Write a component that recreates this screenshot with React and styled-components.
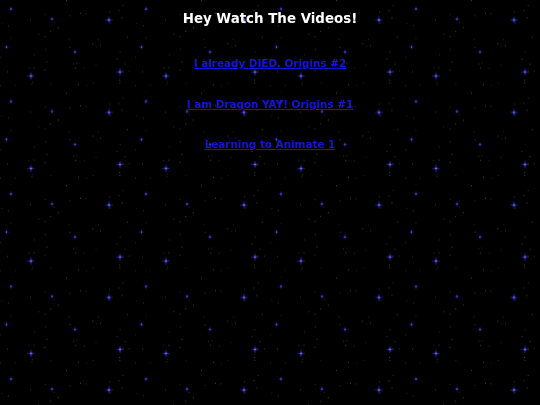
import React from "react";
import styled, { createGlobalStyle } from "styled-components";

const GlobalStyle = createGlobalStyle`
  html, body {
    margin: 0;
    padding: 0;
    background: #000;
  }
  body {
    font-family: "DejaVu Sans", Verdana, sans-serif;
  }
`;

const Sky = styled.svg`
  position: fixed;
  inset: 0;
  width: 100%;
  height: 100%;
  z-index: 0;
`;

const Page = styled.div`
  position: relative;
  z-index: 1;
  display: flex;
  flex-direction: column;
  align-items: center;
  padding-top: 11px;
  min-height: 394px;
`;

const Title = styled.h1`
  margin: 0;
  font-size: 13.4px;
  line-height: 16px;
  font-weight: bold;
  color: #ffffff;
`;

const VideoList = styled.div`
  display: flex;
  flex-direction: column;
  align-items: center;
  gap: 27.5px;
  margin-top: 30px;
`;

const VideoLink = styled.a`
  font-size: 10.4px;
  line-height: 13px;
  font-weight: bold;
  color: #1414e0;
  text-decoration: underline;
`;

// stars in one tile of the background (135 x 92.5)
const bigStars = [
  [109, 20],
  [31, 76],
  [120, 72],
];
const smallStars = [
  [11, 9],
  [52, 19],
  [6.5, 47],
  [75, 52],
];

// faint dust, seeded so the tile stays the same every render
const dust = (() => {
  let seed = 7;
  const rnd = () => {
    seed = (seed * 16807) % 2147483647;
    return seed / 2147483647;
  };
  const out = [];
  for (let i = 0; i < 55; i++) {
    out.push([rnd() * 135, rnd() * 92.5, 0.2 + rnd() * 0.35]);
  }
  return out;
})();

const videos = [
  "I already DIED. Origins #2",
  "I am Dragon YAY! Origins #1",
  "Learning to Animate 1",
];

const Star = ({ x, y, big }) => {
  const arm = big ? 3.8 : 2.4;
  const op = big ? 0.6 : 0.4;
  return (
    <g transform={`translate(${x} ${y})`}>
      <circle r={big ? 2.8 : 2} fill={big ? "url(#glowBig)" : "url(#glowSmall)"} />
      <line x1={-arm} x2={arm} y1="0" y2="0" stroke="#3030e0" strokeOpacity={op} strokeWidth="0.9" />
      <line y1={-arm} y2={arm} x1="0" x2="0" stroke="#3030e0" strokeOpacity={op} strokeWidth="0.9" />
      <rect x="-0.5" y="-0.5" width="1" height="1" fill={big ? "#b0b0ff" : "#7070f0"} />
    </g>
  );
};

const App = () => {
  return (
    <>
      <GlobalStyle />
      <Sky>
        <defs>
          <radialGradient id="glowBig">
            <stop offset="0%" stopColor="#7070f0" stopOpacity="0.8" />
            <stop offset="100%" stopColor="#2020a0" stopOpacity="0" />
          </radialGradient>
          <radialGradient id="glowSmall">
            <stop offset="0%" stopColor="#5050e0" stopOpacity="0.6" />
            <stop offset="100%" stopColor="#2020a0" stopOpacity="0" />
          </radialGradient>
          <pattern id="stars" width="135" height="92.5" patternUnits="userSpaceOnUse">
            {dust.map(([x, y, o], i) => (
              <rect key={i} x={x} y={y} width="0.9" height="0.9" fill="#9a9a9a" opacity={o} />
            ))}
            {smallStars.map(([x, y], i) => (
              <Star key={"s" + i} x={x} y={y} />
            ))}
            {bigStars.map(([x, y], i) => (
              <Star key={"b" + i} x={x} y={y} big />
            ))}
          </pattern>
        </defs>
        <rect width="100%" height="100%" fill="#000" />
        <rect width="100%" height="100%" fill="url(#stars)" />
      </Sky>
      <Page>
        <Title>Hey Watch The Videos!</Title>
        <VideoList>
          {videos.map((v) => (
            <VideoLink key={v} href="#">
              {v}
            </VideoLink>
          ))}
        </VideoList>
      </Page>
    </>
  );
};

export default App;
